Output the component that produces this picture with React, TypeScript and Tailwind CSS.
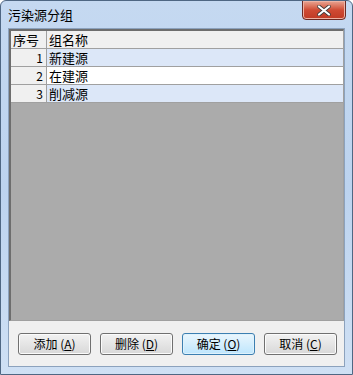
import * as React from 'react';

const rows = [
  { id: 1, name: '新建源', bg: 'bg-[#dce7f8]' },
  { id: 2, name: '在建源', bg: 'bg-white' },
  { id: 3, name: '削减源', bg: 'bg-[#dce7f8]' },
];

const Btn: React.FC<{ label: string; k: string; primary?: boolean }> = ({ label, k, primary }) => (
  <button
    type="button"
    className={
      'h-[22px] w-[73px] rounded-[3px] border text-[12px] leading-none text-black ' +
      (primary
        ? 'border-[#3c7fb1] bg-gradient-to-b from-[#eaf6fd] to-[#bee6fd] shadow-[inset_0_0_0_1px_#dff2fc]'
        : 'border-[#707070] bg-gradient-to-b from-[#f2f2f2] to-[#d8d8d8] shadow-[inset_0_0_0_1px_#fbfbfb]')
    }
  >
    {label} (<span className="underline">{k}</span>)
  </button>
);

const App: React.FC = () => {
  return (
    <div
      className="flex h-[375px] w-[353px] flex-col overflow-hidden rounded-t-[6px] border border-[#4f6783] bg-gradient-to-b from-[#c5d9f1] via-[#bcd3ef] to-[#cfe0f4] text-[12px]"
      style={{ fontFamily: '"Noto Sans CJK SC", "DejaVu Sans", sans-serif' }}
    >
      <div className="relative flex h-[27px] items-center px-[7px]">
        <span className="text-[13px] text-black">污染源分组</span>
        <div className="absolute right-[6px] top-[-1px] flex h-[20px] w-[44px] items-center justify-center rounded-b-[4px] border border-[#6b2a24] bg-gradient-to-b from-[#e8a593] via-[#cf4a33] to-[#c03a24] shadow-[inset_0_0_0_1px_#eeb3a4]">
          <svg width="14" height="11" viewBox="0 0 14 11">
            <path d="M2 1.5 L12 9.5 M12 1.5 L2 9.5" stroke="#3a3a3a" strokeWidth="3.6" strokeLinecap="round" />
            <path d="M2 1.5 L12 9.5 M12 1.5 L2 9.5" stroke="#ffffff" strokeWidth="2.2" strokeLinecap="round" />
          </svg>
        </div>
      </div>
      <div className="mx-[7px] mb-[7px] flex flex-1 flex-col border border-[#8ca2bd] bg-[#f0f0f0]">
        <div className="flex h-[292px] flex-col border-t-2 border-l-2 border-[#6d6d6d] border-r border-b border-r-[#a0a0a0] border-b-[#a0a0a0] bg-[#ababab]">
          <div className="flex h-[18px] border-b border-[#a0a0a0] bg-[#f0f0f0]">
            <div className="w-[36px] border-r border-[#a0a0a0] pl-[2px] text-[13px] leading-[17px]">序号</div>
            <div className="flex-1 pl-[2px] text-[13px] leading-[17px]">组名称</div>
          </div>
          {rows.map((r) => (
            <div key={r.id} className="flex h-[18px] border-b border-[#a0a0a0]">
              <div className="w-[36px] border-r border-[#a0a0a0] bg-[#f0f0f0] pr-[3px] text-right leading-[17px]">{r.id}</div>
              <div className={'flex-1 pl-[2px] text-[13px] leading-[17px] ' + r.bg}>{r.name}</div>
            </div>
          ))}
        </div>
        <div className="flex flex-1 items-center gap-[9px] pl-[9px] pt-[1px]">
          <Btn label="添加" k="A" />
          <Btn label="删除" k="D" />
          <Btn label="确定" k="O" primary />
          <Btn label="取消" k="C" />
        </div>
      </div>
    </div>
  );
};

export default App;
